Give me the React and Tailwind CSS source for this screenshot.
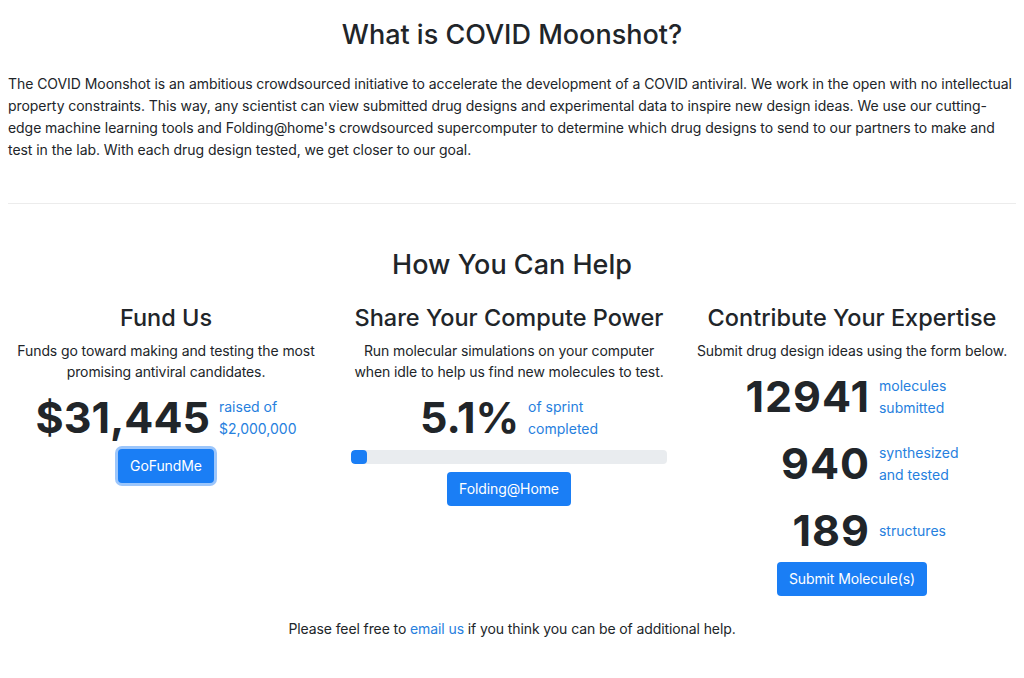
import { useState } from "react"

const FONT = { fontFamily: "Inter, 'Noto Sans', 'Liberation Sans', sans-serif" }

const STATS = [
  { value: "12941", label: ["molecules", "submitted"] },
  { value: "940", label: ["synthesized", "and tested"] },
  { value: "189", label: ["structures"] },
]

function BigNumber({ value, label }) {
  return (
    <div className="flex items-center justify-center gap-[9px]">
      <span className="text-[43px] font-bold leading-[53px] text-[#212529]">{value}</span>
      <span className="text-left text-[14px] leading-[22px] text-[#2680de]">
        {label.map((line) => (
          <span key={line} className="block">
            {line}
          </span>
        ))}
      </span>
    </div>
  )
}

function Button({ children, focused }) {
  return (
    <button
      type="button"
      className={`rounded-[4px] bg-[#1a7ef5] px-[12px] text-[14px] leading-[34px] tracking-[-0.1px] text-white ${
        focused ? "ring-[3px] ring-[#9cc6fb]" : ""
      }`}
    >
      {children}
    </button>
  )
}

export default function App() {
  const [progress] = useState(5.1)

  return (
    <div style={FONT} className="min-h-[678px] overflow-hidden bg-white text-[#212529]">
      <section className="px-[8px] pt-[18px]">
        <h2 className="text-center text-[27px] font-medium leading-[34px]">What is COVID Moonshot?</h2>
        <p className="mt-[21px] text-[14px] leading-[22px] tracking-[-0.06px]">
          The COVID Moonshot is an ambitious crowdsourced initiative to accelerate the development of a COVID
          antiviral. We work in the open with no intellectual property constraints. This way, any scientist can view
          submitted drug designs and experimental data to inspire new design ideas. We use our cutting-edge machine
          learning tools and Folding@home's crowdsourced supercomputer to determine which drug designs to send to our
          partners to make and test in the lab. With each drug design tested, we get closer to our goal.
        </p>
        <hr className="mt-[42px] border-t border-[#ececec]" />
      </section>

      <section className="pt-[44px]">
        <h2 className="text-center text-[27px] font-medium leading-[34px]">How You Can Help</h2>

        <div className="mt-[21px] grid grid-cols-3 gap-[11px] pr-[6px] text-center">
          <div className="flex flex-col items-center">
            <h3 className="text-[23.5px] font-medium leading-[30px]">Fund Us</h3>
            <p className="mt-[7px] w-[310px] text-[14px] leading-[21px] tracking-[-0.1px]">
              Funds go toward making and testing the most promising antiviral candidates.
            </p>
            <div className="mt-[9px]">
              <BigNumber value="$31,445" label={["raised of", "$2,000,000"]} />
            </div>
            <div className="mt-[5px]">
              <Button focused>GoFundMe</Button>
            </div>
          </div>

          <div className="flex flex-col items-center">
            <h3 className="text-[23.5px] font-medium leading-[30px]">Share Your Compute Power</h3>
            <p className="mt-[7px] w-[320px] text-[14px] leading-[21px] tracking-[-0.1px]">
              Run molecular simulations on your computer when idle to help us find new molecules to test.
            </p>
            <div className="mt-[9px]">
              <BigNumber value="5.1%" label={["of sprint", "completed"]} />
            </div>
            <div className="mt-[6px] h-[14px] w-[316px] overflow-hidden rounded-[4px] bg-[#e9ecef]">
              <div className="h-full rounded-[4px] bg-[#1a7ef5]" style={{ width: `${progress}%` }} />
            </div>
            <div className="mt-[8px]">
              <Button>Folding@Home</Button>
            </div>
          </div>

          <div className="flex flex-col items-center">
            <h3 className="text-[23.5px] font-medium leading-[30px]">Contribute Your Expertise</h3>
            <p className="mt-[7px] whitespace-nowrap text-[14px] leading-[21px] tracking-[-0.1px]">
              Submit drug design ideas using the form below.
            </p>
            <table className="mt-[2px]">
              <tbody>
                {STATS.map((stat) => (
                  <tr key={stat.value}>
                    <td className="py-[7px] pr-[9px] text-right align-middle text-[43px] font-bold leading-[53px] tracking-[1px]">
                      {stat.value}
                    </td>
                    <td className="py-[7px] text-left align-middle text-[14px] leading-[22px] text-[#2680de]">
                      {stat.label.map((line) => (
                        <span key={line} className="block">
                          {line}
                        </span>
                      ))}
                    </td>
                  </tr>
                ))}
              </tbody>
            </table>
            <div className="-mt-[2px]">
              <Button>Submit Molecule(s)</Button>
            </div>
          </div>
        </div>

        <p className="mt-[22px] text-center text-[14px] leading-[22px] tracking-[-0.1px]">
          Please feel free to <a className="text-[#2680de]">email us</a> if you think you can be of additional help.
        </p>
      </section>
    </div>
  )
}
